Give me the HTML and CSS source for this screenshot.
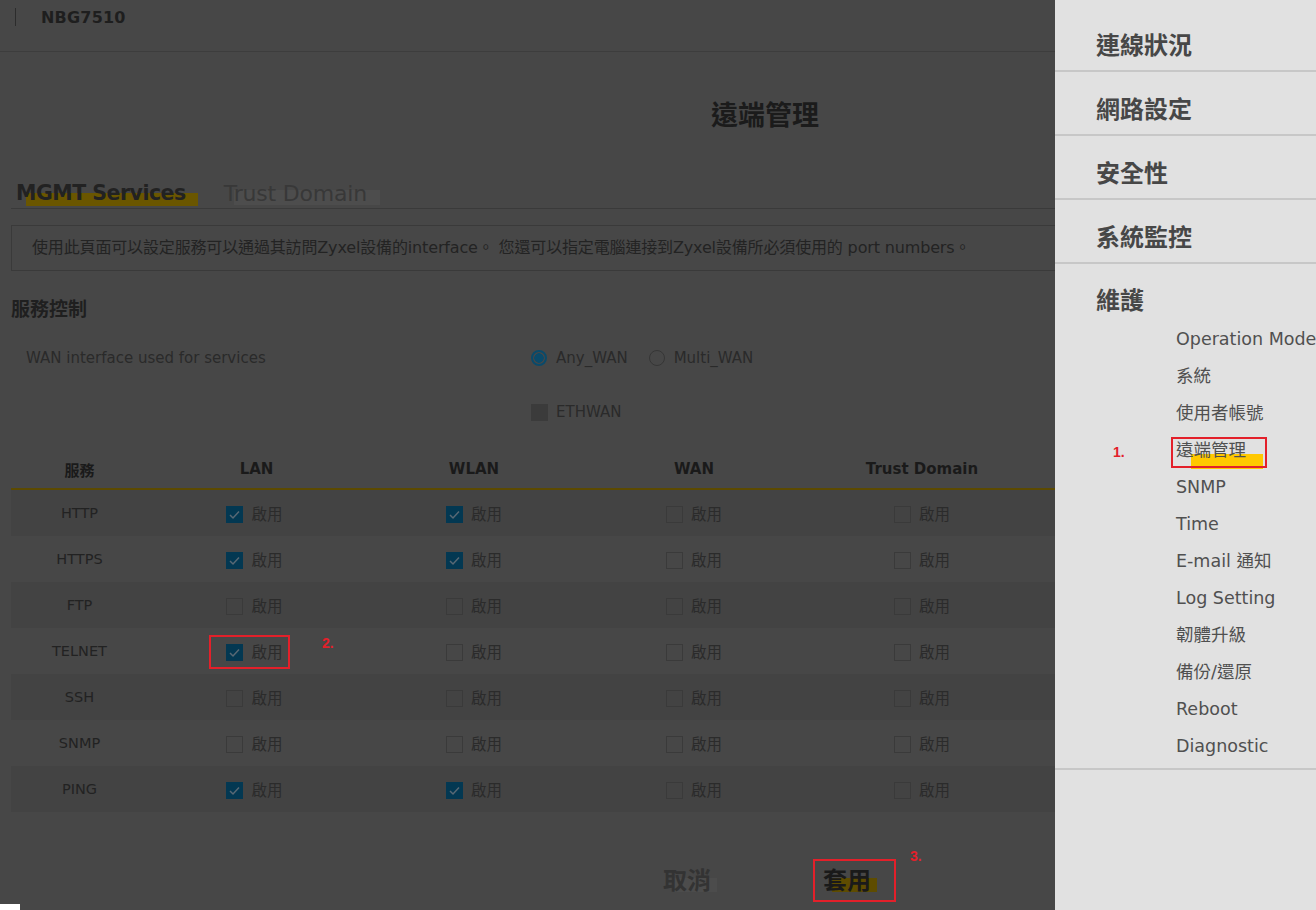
FILE: index.html
```html
<!DOCTYPE html>
<html lang="zh-Hant">
<head>
<meta charset="utf-8">
<title>遠端管理</title>
<link rel="stylesheet" href="styles.css">
</head>
<body>
<div class="page">
  <main class="main">
    <header class="topbar">
      <span class="bar-line"></span>
      <span class="model">NBG7510</span>
    </header>
    <h1 class="title">遠端管理</h1>
    <nav class="tabs">
      <span class="tab tab-active">MGMT Services</span>
      <span class="tab tab-idle">Trust Domain</span>
    </nav>
    <div class="desc">使用此頁面可以設定服務可以通過其訪問Zyxel設備的interface。 您還可以指定電腦連接到Zyxel設備所必須使用的 port numbers。</div>
    <h2 class="section">服務控制</h2>
    <div class="wan-row">
      <span class="wan-label">WAN interface used for services</span>
      <label class="radio"><span class="radio-dot on"></span>Any_WAN</label>
      <label class="radio"><span class="radio-dot"></span>Multi_WAN</label>
    </div>
    <div class="eth-row">
      <span class="box-filled"></span>ETHWAN
    </div>
    <table class="svc">
      <colgroup>
        <col class="c-svc"><col class="c-lan"><col class="c-wlan"><col class="c-wan"><col class="c-trust"><col class="c-rest">
      </colgroup>
      <thead>
        <tr><th>服務</th><th>LAN</th><th>WLAN</th><th>WAN</th><th>Trust Domain</th><th></th></tr>
      </thead>
      <tbody>
        <tr class="odd"><td>HTTP</td><td><span class="chk on"></span>啟用</td><td><span class="chk on"></span>啟用</td><td><span class="chk"></span>啟用</td><td><span class="chk"></span>啟用</td><td></td></tr>
        <tr><td>HTTPS</td><td><span class="chk on"></span>啟用</td><td><span class="chk on"></span>啟用</td><td><span class="chk"></span>啟用</td><td><span class="chk"></span>啟用</td><td></td></tr>
        <tr class="odd"><td>FTP</td><td><span class="chk"></span>啟用</td><td><span class="chk"></span>啟用</td><td><span class="chk"></span>啟用</td><td><span class="chk"></span>啟用</td><td></td></tr>
        <tr><td>TELNET</td><td><span class="chk on"></span>啟用</td><td><span class="chk"></span>啟用</td><td><span class="chk"></span>啟用</td><td><span class="chk"></span>啟用</td><td></td></tr>
        <tr class="odd"><td>SSH</td><td><span class="chk"></span>啟用</td><td><span class="chk"></span>啟用</td><td><span class="chk"></span>啟用</td><td><span class="chk"></span>啟用</td><td></td></tr>
        <tr><td>SNMP</td><td><span class="chk"></span>啟用</td><td><span class="chk"></span>啟用</td><td><span class="chk"></span>啟用</td><td><span class="chk"></span>啟用</td><td></td></tr>
        <tr class="odd"><td>PING</td><td><span class="chk on"></span>啟用</td><td><span class="chk on"></span>啟用</td><td><span class="chk"></span>啟用</td><td><span class="chk"></span>啟用</td><td></td></tr>
      </tbody>
    </table>
    <div class="actions">
      <span class="btn btn-cancel">取消</span>
      <span class="btn btn-apply">套用</span>
    </div>
  </main>
  <aside class="menu">
    <div class="menu-group"><div class="menu-head">連線狀況</div></div>
    <div class="menu-group"><div class="menu-head">網路設定</div></div>
    <div class="menu-group"><div class="menu-head">安全性</div></div>
    <div class="menu-group"><div class="menu-head">系統監控</div></div>
    <div class="menu-group open">
      <div class="menu-head">維護</div>
      <ul class="sub">
        <li>Operation Mode</li>
        <li>系統</li>
        <li>使用者帳號</li>
        <li><span class="cur">遠端管理</span></li>
        <li>SNMP</li>
        <li>Time</li>
        <li>E-mail 通知</li>
        <li>Log Setting</li>
        <li>韌體升級</li>
        <li>備份/還原</li>
        <li>Reboot</li>
        <li>Diagnostic</li>
      </ul>
    </div>
  </aside>
</div>
<div class="mark mark-1"></div><span class="num num-1">1.</span>
<div class="mark mark-2"></div><span class="num num-2">2.</span>
<div class="mark mark-3"></div><span class="num num-3">3.</span>
<div class="corner"></div>
</body>
</html>
```
FILE: styles.css
```css
html, body {
  margin: 0;
  padding: 0;
  width: 1316px;
  height: 910px;
  overflow: hidden;
  background: #474747;
  font-family: "DejaVu Sans", "Noto Sans CJK TC", sans-serif;
  color: #222;
}
.page {
  display: flex;
  width: 1316px;
  height: 910px;
}
.main {
  flex: 0 0 1055px;
  width: 1055px;
  overflow: hidden;
  background: #474747;
}
.topbar {
  height: 51px;
  border-bottom: 1px solid #3d3d3d;
  display: flex;
  align-items: flex-start;
  padding-left: 15px;
}
.bar-line {
  width: 1px;
  height: 18px;
  margin-top: 8px;
  background: #2c2c2c;
}
.model {
  margin-left: 25px;
  margin-top: 5px;
  font-weight: bold;
  font-size: 16px;
  line-height: 26px;
  color: #1e1e1e;
  letter-spacing: 0.2px;
}
.title {
  margin: 44px 0 0 0;
  padding-left: 711px;
  font-family: "Noto Sans CJK TC", sans-serif;
  font-size: 27px;
  line-height: 36px;
  font-weight: bold;
  color: #1b1b1b;
}
.tabs {
  margin: 46px 0 0 11px;
  height: 30px;
  border-bottom: 1px solid #3a3a3a;
  display: flex;
  padding-left: 5px;
  gap: 38px;
}
.tab {
  position: relative;
  z-index: 0;
  font-size: 22px;
  line-height: 31px;
}
.tab-active {
  font-weight: bold;
  font-size: 20.5px;
  color: #222;
  letter-spacing: -0.5px;
}
.tab-active::before {
  content: "";
  position: absolute;
  z-index: -1;
  left: 10px;
  right: -12px;
  top: 15px;
  height: 13px;
  background: #6a5600;
}
.tab-idle {
  color: #383838;
  font-weight: normal;
  letter-spacing: -0.2px;
}
.tab-idle::before {
  content: "";
  position: absolute;
  z-index: -1;
  left: 10px;
  right: -13px;
  top: 12px;
  height: 15px;
  background: #4d4d4d;
}
.desc {
  margin: 16px -40px 0 11px;
  height: 44px;
  border: 1px solid #3a3a3a;
  padding-left: 20px;
  font-family: "DejaVu Sans", "Noto Sans CJK TC", sans-serif;
  font-size: 16px;
  line-height: 44px;
  color: #232323;
  white-space: nowrap;
  letter-spacing: -0.15px;
}
.section {
  margin: 23px 0 0 11px;
  font-family: "Noto Sans CJK TC", sans-serif;
  font-size: 19px;
  line-height: 28px;
  font-weight: bold;
  color: #1f1f1f;
}
.wan-row {
  margin-top: 24px;
  display: flex;
  align-items: center;
  height: 24px;
  font-size: 15px;
  color: #2a2a2a;
}
.wan-label {
  width: 505px;
  padding-left: 26px;
}
.radio {
  display: inline-flex;
  align-items: center;
  gap: 9px;
  margin-right: 21px;
  color: #2a2a2a;
}
.radio-dot {
  width: 14px;
  height: 14px;
  border-radius: 50%;
  border: 1px solid #363636;
  box-sizing: content-box;
}
.radio-dot.on {
  border: 2px solid #0a4a6a;
  width: 12px;
  height: 12px;
  background: radial-gradient(circle, #0a4a6a 0 4.5px, #474747 5px);
}
.eth-row {
  margin: 30px 0 0 531px;
  display: flex;
  align-items: center;
  gap: 8px;
  height: 24px;
  font-size: 15px;
  color: #2a2a2a;
}
.box-filled {
  width: 17px;
  height: 17px;
  background: #3b3b3b;
}
.svc {
  margin: 26px 0 0 11px;
  width: 1044px;
  border-collapse: collapse;
  table-layout: fixed;
}
.c-svc { width: 134px; }
.c-lan { width: 219px; }
.c-wlan { width: 220px; }
.c-wan { width: 220px; }
.c-trust { width: 236px; }
.c-rest { width: 15px; }
.svc th {
  height: 38px;
  border-bottom: 2px solid #5c4a00;
  font-size: 15px;
  font-weight: bold;
  color: #1a1a1a;
  text-align: center;
  padding: 0;
  font-family: "DejaVu Sans", "Noto Sans CJK TC", sans-serif;
}
.svc th:nth-child(2) { padding-left: 4px; }
.svc th:first-child {
  font-family: "Noto Sans CJK TC", sans-serif;
  padding-left: 3px;
}
.svc td {
  height: 46px;
  padding: 0;
  text-align: center;
  font-size: 15.5px;
  color: #2b2b2b;
  font-family: "Noto Sans CJK TC", sans-serif;
}
.svc td:first-child {
  font-family: "DejaVu Sans", sans-serif;
  font-size: 14.5px;
  color: #222;
  padding-left: 3px;
}
.svc tr.odd td {
  background: #434343;
}
.chk {
  display: inline-block;
  vertical-align: -3px;
  width: 15px;
  height: 15px;
  border: 1px solid #3a3a3a;
  margin-right: 8px;
}
.chk.on {
  border-color: #033852;
  background: #033852 url("data:image/svg+xml;utf8,<svg xmlns='http://www.w3.org/2000/svg' width='15' height='15'><path d='M3 8 L6 11 L12 4.5' fill='none' stroke='%23586874' stroke-width='1.5'/></svg>") no-repeat center;
}
.actions {
  margin-top: 50px;
  display: flex;
  padding-left: 663px;
  gap: 112px;
}
.btn {
  position: relative;
  z-index: 0;
  font-family: "Noto Sans CJK TC", sans-serif;
  font-size: 24px;
  line-height: 34px;
  font-weight: bold;
}
.btn::before {
  content: "";
  position: absolute;
  z-index: -1;
  left: 9px;
  right: -6px;
  top: 16px;
  height: 14px;
}
.btn-cancel { color: #333; }
.btn-cancel::before { background: #4c4c4c; }
.btn-apply { color: #1a1a1a; }
.btn-apply::before { background: #5e4c00; }

.menu {
  flex: 1;
  background: #e1e1e1;
  padding-top: 8px;
  font-family: "DejaVu Sans", "Noto Sans CJK TC", sans-serif;
  overflow: hidden;
}
.menu-group {
  border-bottom: 2px solid #c7c7c7;
}
.menu-head {
  padding: 22px 0 12px 41px;
  font-family: "Noto Sans CJK TC", sans-serif;
  font-size: 24px;
  line-height: 28px;
  font-weight: bold;
  color: #474747;
}
.open .menu-head {
  padding-bottom: 0;
  padding-top: 21px;
}
.sub {
  list-style: none;
  margin: 8px 0 0 0;
  padding: 0 0 3px 121px;
}
.sub li {
  font-size: 17.5px;
  line-height: 37px;
  color: #505050;
  white-space: nowrap;
}
.cur {
  position: relative;
  z-index: 0;
}
.cur::before {
  content: "";
  position: absolute;
  z-index: -1;
  left: 15px;
  right: -17px;
  top: 14px;
  height: 15px;
  background: #ffc800;
}
.mark {
  position: absolute;
  border: 2px solid #e3202a;
  box-sizing: border-box;
}
.mark-1 { left: 1171px; top: 437px; width: 96px; height: 31px; }
.mark-2 { left: 209px; top: 635px; width: 81px; height: 34px; }
.mark-3 { left: 813px; top: 859px; width: 83px; height: 43px; }
.num {
  position: absolute;
  font-family: "Liberation Sans", sans-serif;
  font-weight: bold;
  font-size: 14px;
  color: #e3202a;
}
.num-1 { left: 1113px; top: 444px; }
.num-2 { left: 322px; top: 635px; }
.num-3 { left: 910px; top: 848px; }
.corner {
  position: absolute;
  left: 0;
  top: 904px;
  width: 20px;
  height: 6px;
  background: #fff;
}
```
